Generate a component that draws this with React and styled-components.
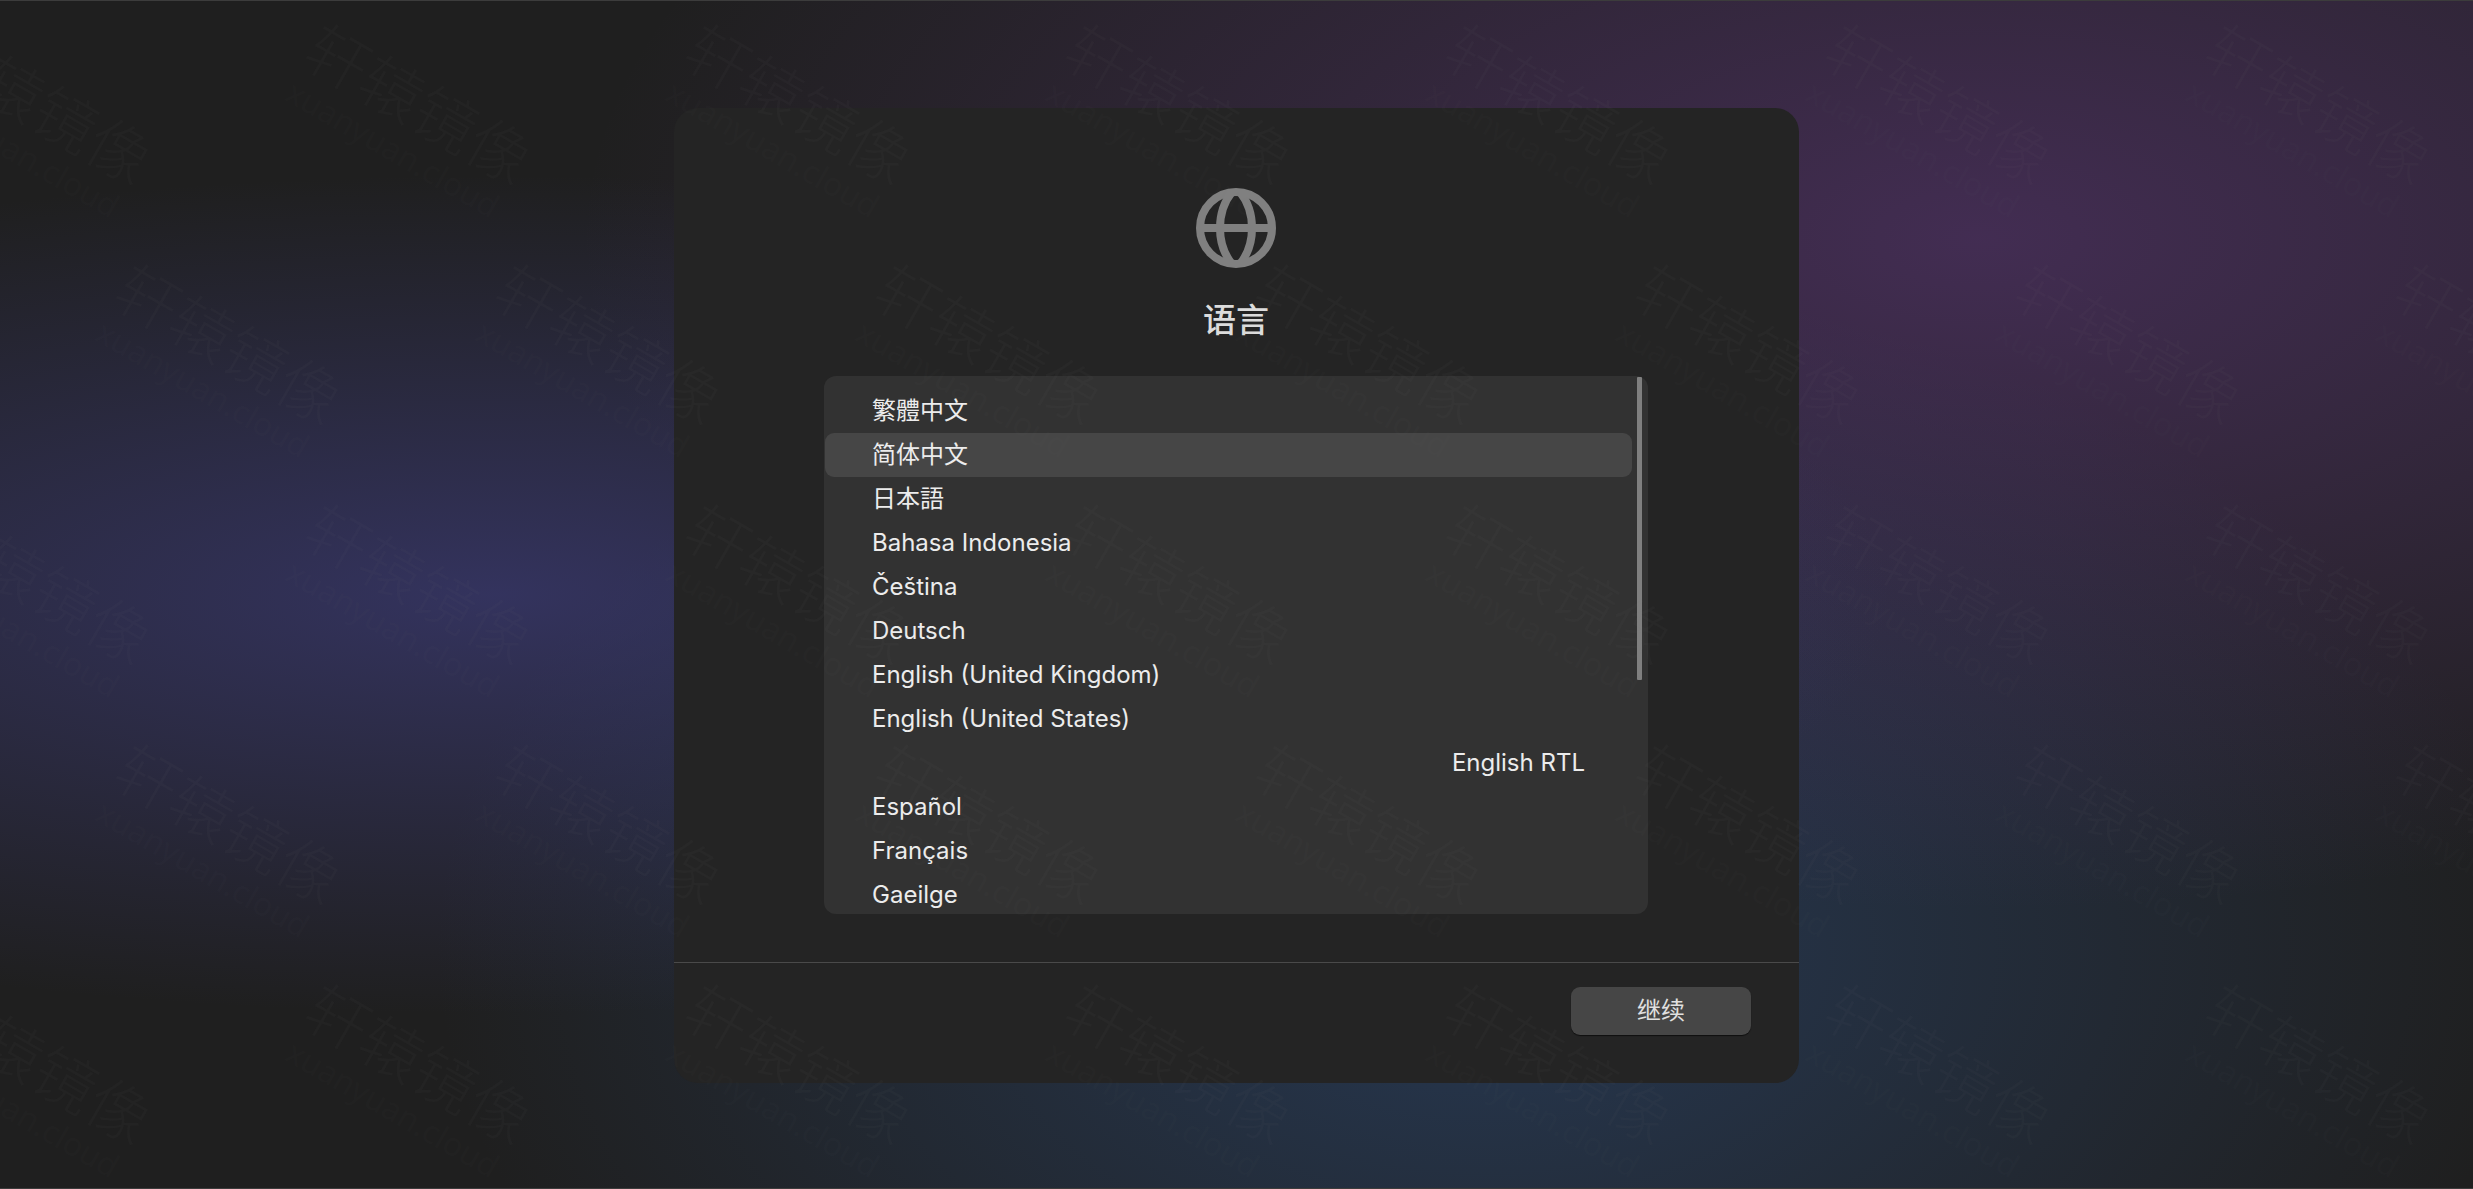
import React, { useState } from "react";
import styled, { createGlobalStyle } from "styled-components";

const GlobalStyle = createGlobalStyle`
  *, *::before, *::after { box-sizing: border-box; }
  body {
    margin: 0;
    background: #1f1f1f;
    color: #ececec;
    font-family: Inter, "Noto Sans CJK SC", sans-serif;
    font-size: 24px;
    line-height: 44px;
  }
`;

const Screen = styled.main`
  position: relative;
  display: flex;
  align-items: center;
  justify-content: center;
  min-height: 100vh;
  padding-top: 2px;
  overflow: hidden;
  border-top: 1px solid #3c3c3c;
  border-bottom: 1px solid #3c3c3c;
  background:
    radial-gradient(ellipse at 20% 50%, rgba(72, 71, 156, 0.5) 0%, transparent 50%),
    radial-gradient(ellipse at 80% 20%, rgba(120, 66, 160, 0.4) 0%, transparent 50%),
    radial-gradient(ellipse at 60% 80%, rgba(46, 81, 132, 0.5) 0%, transparent 50%),
    #1f1f1f;
`;

const Dialog = styled.form`
  display: flex;
  flex-direction: column;
  width: min(1125px, 100%);
  border-radius: 24px;
  background: #242424;
`;

const DialogBody = styled.div`
  display: flex;
  flex-direction: column;
  align-items: center;
  padding: 80px 151px 48px 150px;
`;

const Globe = styled.svg`
  width: 80px;
  height: 80px;
  fill: none;
  stroke: #808080;
  stroke-width: 8;
`;

const Title = styled.h1`
  margin: 32px 0 36px;
  font-size: 33px;
  font-weight: 500;
  line-height: 40px;
  color: #dcdcdc;
`;

const ListFrame = styled.div`
  position: relative;
  width: 100%;
  border-radius: 12px;
  background: #323232;
`;

const LanguageList = styled.fieldset`
  height: 538px;
  margin: 0;
  padding: 13px 16px 0 1px;
  border: 0;
  overflow: hidden;
`;

const Language = styled.label`
  display: block;
  height: 44px;
  padding: 0 47px;
  border-radius: 9px;
  white-space: nowrap;
  cursor: pointer;
  &:has(input:checked) { background: #464646; }
`;

const HiddenRadio = styled.input`
  position: absolute;
  width: 1px;
  height: 1px;
  margin: 0;
  opacity: 0;
`;

const ScrollThumb = styled.div`
  position: absolute;
  top: 1px;
  right: 6px;
  width: 5px;
  height: 303px;
  border-radius: 1px;
  background: #7f7f7f;
`;

const Footer = styled.footer`
  display: flex;
  justify-content: flex-end;
  padding: 24px 48px 48px;
  border-top: 1px solid #4a4a4a;
`;

const PrimaryButton = styled.button`
  width: 180px;
  height: 48px;
  padding: 0;
  border: 0;
  border-radius: 9px;
  background: #464646;
  box-shadow: 0 1px 1px rgba(0, 0, 0, 0.6);
  color: #e0e0e0;
  font: inherit;
  cursor: pointer;
`;

const WatermarkLayer = styled.div`
  position: absolute;
  inset: 0;
  display: flex;
  flex-direction: column;
  overflow: hidden;
  pointer-events: none;
  user-select: none;
  color: rgba(118, 118, 118, 0.047);
`;

const WatermarkRow = styled.div`
  display: flex;
  flex: none;
  height: 240px;
  margin-left: ${(p) => (p.$shifted ? "-351px" : "-161px")};
`;

const Stamp = styled.div`
  display: flex;
  flex: none;
  flex-direction: column;
  align-items: center;
  justify-content: center;
  width: 380px;
  transform: rotate(30deg);
  font-family: "Noto Sans", "Noto Sans CJK SC", sans-serif;
`;

const StampName = styled.span`
  font-size: 62px;
  font-weight: 300;
  line-height: 64px;
  white-space: nowrap;
`;

const StampHost = styled.span`
  font-size: 32px;
  line-height: 40px;
`;

const languages = [
  { code: "zh-Hant", name: "繁體中文" },
  { code: "zh-Hans", name: "简体中文" },
  { code: "ja", name: "日本語" },
  { code: "id", name: "Bahasa Indonesia" },
  { code: "cs", name: "Čeština" },
  { code: "de", name: "Deutsch" },
  { code: "en-GB", name: "English (United Kingdom)" },
  { code: "en-US", name: "English (United States)" },
  { code: "en", name: "English RTL", dir: "rtl" },
  { code: "es", name: "Español" },
  { code: "fr", name: "Français" },
  { code: "ga", name: "Gaeilge" },
];

const watermarkRows = [0, 1, 2, 3, 4];
const watermarkColumns = [0, 1, 2, 3, 4, 5, 6, 7];

function Watermark() {
  return (
    <WatermarkLayer aria-hidden="true">
      {watermarkRows.map((row) => (
        <WatermarkRow key={row} $shifted={row % 2 === 1}>
          {watermarkColumns.map((column) => (
            <Stamp key={column}>
              <StampName>轩辕镜像</StampName>
              <StampHost>xuanyuan.cloud</StampHost>
            </Stamp>
          ))}
        </WatermarkRow>
      ))}
    </WatermarkLayer>
  );
}

export default function App() {
  const [selected, setSelected] = useState("zh-Hans");

  return (
    <>
      <GlobalStyle />
      <Screen lang="zh-Hans">
        <Dialog onSubmit={(event) => event.preventDefault()}>
          <DialogBody>
            <Globe viewBox="0 0 80 80" aria-hidden="true">
              <circle cx="40" cy="40" r="36" />
              <path d="M4 40H76" />
              <path d="M36 4C20 24 20 56 36 76" />
              <path d="M44 4C60 24 60 56 44 76" />
            </Globe>
            <Title id="language-title">语言</Title>
            <ListFrame>
              <LanguageList aria-labelledby="language-title">
                {languages.map(({ code, name, dir }) => (
                  <Language key={code} lang={code} dir={dir}>
                    <HiddenRadio
                      type="radio"
                      name="language"
                      value={code}
                      checked={selected === code}
                      onChange={() => setSelected(code)}
                    />
                    {name}
                  </Language>
                ))}
              </LanguageList>
              <ScrollThumb />
            </ListFrame>
          </DialogBody>
          <Footer>
            <PrimaryButton type="submit">继续</PrimaryButton>
          </Footer>
        </Dialog>
        <Watermark />
      </Screen>
    </>
  );
}
